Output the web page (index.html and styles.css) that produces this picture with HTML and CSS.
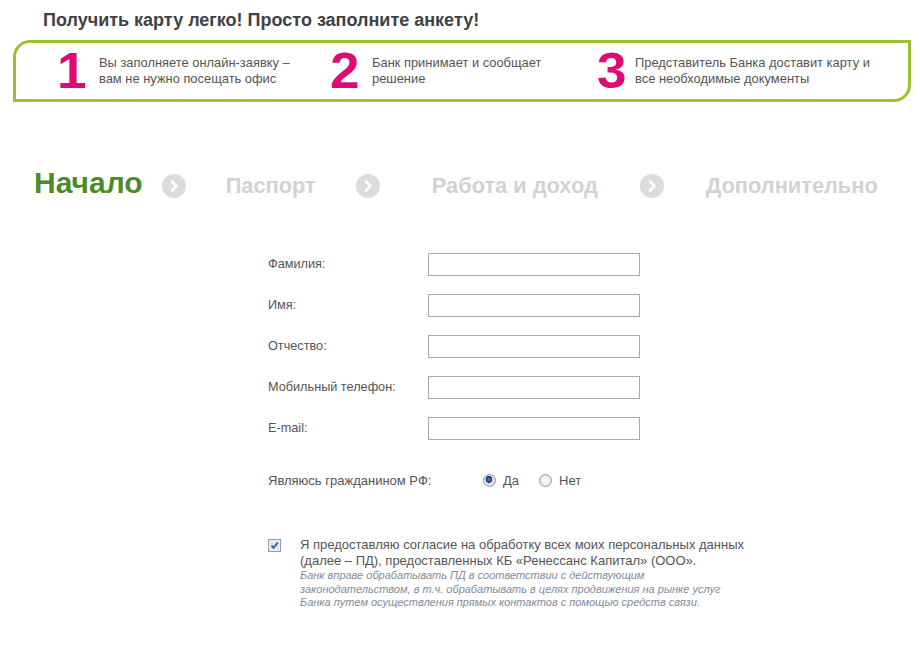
FILE: index.html
```html
<!DOCTYPE html>
<html lang="ru">
<head>
<meta charset="utf-8">
<title>Получить карту</title>
<link rel="stylesheet" href="styles.css">
</head>
<body>
<h1 class="title">Получить карту легко! Просто заполните анкету!</h1>
<div class="howto">
  <div class="howto-item">
    <span class="howto-num">1</span>
    <span class="howto-text">Вы заполняете онлайн-заявку –<br>вам не нужно посещать офис</span>
  </div>
  <div class="howto-item">
    <span class="howto-num">2</span>
    <span class="howto-text">Банк принимает и сообщает<br>решение</span>
  </div>
  <div class="howto-item">
    <span class="howto-num n3">3</span>
    <span class="howto-text">Представитель Банка доставит карту и<br>все необходимые документы</span>
  </div>
</div>

<nav class="steps">
  <span class="step step-active">Начало</span>
  <span class="arrow a1"><svg width="24" height="24" viewBox="0 0 24 24"><circle cx="12" cy="12" r="12" fill="#dcdcdc"/><path d="M10 7.5 L14.5 12 L10 16.5" fill="none" stroke="#fff" stroke-width="2.6" stroke-linecap="round" stroke-linejoin="round"/></svg></span>
  <span class="step s2">Паспорт</span>
  <span class="arrow a2"><svg width="24" height="24" viewBox="0 0 24 24"><circle cx="12" cy="12" r="12" fill="#dcdcdc"/><path d="M10 7.5 L14.5 12 L10 16.5" fill="none" stroke="#fff" stroke-width="2.6" stroke-linecap="round" stroke-linejoin="round"/></svg></span>
  <span class="step s3">Работа и доход</span>
  <span class="arrow a3"><svg width="24" height="24" viewBox="0 0 24 24"><circle cx="12" cy="12" r="12" fill="#dcdcdc"/><path d="M10 7.5 L14.5 12 L10 16.5" fill="none" stroke="#fff" stroke-width="2.6" stroke-linecap="round" stroke-linejoin="round"/></svg></span>
  <span class="step s4">Дополнительно</span>
</nav>

<form class="form">
  <div class="fields">
    <label class="field-label" for="f1">Фамилия:</label><input class="field-input" id="f1" type="text">
    <label class="field-label" for="f2">Имя:</label><input class="field-input" id="f2" type="text">
    <label class="field-label" for="f3">Отчество:</label><input class="field-input" id="f3" type="text">
    <label class="field-label" for="f4">Мобильный телефон:</label><input class="field-input" id="f4" type="text">
    <label class="field-label" for="f5">E-mail:</label><input class="field-input" id="f5" type="text">
  </div>
  <div class="citizen">
    <span class="citizen-label">Являюсь гражданином РФ:</span>
    <label class="radio"><input type="radio" name="rf" checked><span>Да</span></label>
    <label class="radio"><input type="radio" name="rf"><span>Нет</span></label>
  </div>
  <div class="consent">
    <span class="checkbox"><svg width="13" height="13" viewBox="0 0 13 13"><rect x="0.5" y="0.5" width="12" height="12" fill="#e9eef4" stroke="#8f9fb0"/><rect x="2" y="2" width="9" height="9" fill="#dfe6ef"/><path d="M3.5 6.5 L5.5 8.8 L9.8 3.6" fill="none" stroke="#3c5a9a" stroke-width="1.8"/></svg></span>
    <div class="consent-body">
      <p class="consent-text">Я предоставляю согласие на обработку всех моих персональных данных<br>(далее – ПД), предоставленных КБ «Ренессанс Капитал» (ООО».</p>
      <p class="consent-note">Банк вправе обрабатывать ПД в соответствии с действующим<br>законодательством, в т.ч. обрабатывать в целях продвижения на рынке услуг<br>Банка путем осуществления прямых контактов с помощью средств связи.</p>
    </div>
  </div>
</form>
</body>
</html>
```

FILE: styles.css
```css
html, body {
  margin: 0;
  padding: 0;
  background: #ffffff;
}
body {
  font-family: "Liberation Sans", Arial, sans-serif;
  color: #555555;
  width: 920px;
}
.title {
  margin: 9px 0 0 43px;
  font-size: 18px;
  line-height: 22px;
  font-weight: bold;
  color: #3e4145;
}
.howto {
  margin: 9px 9px 0 13px;
  height: 56px;
  border: 3px solid #9cc132;
  border-radius: 17px 0 17px 0;
  display: flex;
  align-items: center;
  padding-left: 41px;
}
.howto-item {
  display: flex;
  align-items: center;
}
.howto-item:nth-child(1) { width: 273px; }
.howto-item:nth-child(2) { width: 267px; }
.howto-num {
  font-size: 50px;
  line-height: 50px;
  font-weight: bold;
  color: #df0b74;
  width: 42px;
  transform: scaleX(1.06);
  transform-origin: left center;
}
.howto-num.n3 { width: 38px; }
.howto-text {
  font-size: 12.9px;
  line-height: 16px;
  color: #555555;
}
.steps {
  display: flex;
  align-items: baseline;
  margin-top: 66px;
  padding-left: 34px;
  height: 30px;
}
.step {
  font-weight: bold;
  font-size: 21.8px;
  line-height: 22px;
  color: #d2d2d2;
}
.step-active {
  font-size: 30px;
  line-height: 30px;
  color: #4b8c27;
}
.arrow {
  display: block;
  width: 24px;
  height: 24px;
  align-self: center;
  margin-top: 6px;
}
.arrow svg { display: block; }
.a1 { margin-left: 19px; }
.s2 { margin-left: 40px; }
.a2 { margin-left: 40px; }
.s3 { margin-left: 52px; }
.a3 { margin-left: 42px; }
.s4 { margin-left: 42px; }
.form {
  margin: 55px 0 0 268px;
}
.fields {
  display: grid;
  grid-template-columns: 160px 212px;
  row-gap: 18px;
}
.field-label {
  font-size: 12.7px;
  line-height: 23px;
  color: #555555;
}
.field-input {
  box-sizing: border-box;
  width: 212px;
  height: 23px;
  margin: 0;
  border: 1px solid #a9a9a9;
  background: #ffffff;
  padding: 2px 4px;
  font-family: inherit;
  font-size: 12px;
}
.citizen {
  display: flex;
  align-items: center;
  margin-top: 29px;
  height: 23px;
  font-size: 13px;
}
.citizen-label {
  width: 215px;
}
.radio {
  display: flex;
  align-items: center;
  margin-right: 20px;
}
.radio span {
  margin-left: 7px;
}
.radio input {
  appearance: none;
  -webkit-appearance: none;
  margin: 0;
  width: 13px;
  height: 13px;
  border-radius: 50%;
  border: 1px solid #8a9aab;
  background: radial-gradient(circle at 50% 50%, #ffffff 0, #e2e6ea 70%, #d5dae0 100%);
  box-sizing: border-box;
}
.radio input:checked {
  background: radial-gradient(circle at 45% 40%, #5a8ac8 0, #1e4880 2.3px, #17356a 3.2px, #e3e7ec 3.6px, #d5dae0 100%);
}
.consent {
  display: flex;
  align-items: flex-start;
  margin-top: 45px;
}
.checkbox {
  display: block;
  width: 13px;
  height: 13px;
  margin-top: 2px;
}
.checkbox svg { display: block; }
.consent-body {
  margin-left: 19px;
}
.consent-text {
  margin: 0;
  font-size: 13px;
  line-height: 16px;
  color: #555555;
}
.consent-note {
  margin: 0;
  font-size: 11px;
  line-height: 13.5px;
  font-style: italic;
  color: #838b96;
}
```
